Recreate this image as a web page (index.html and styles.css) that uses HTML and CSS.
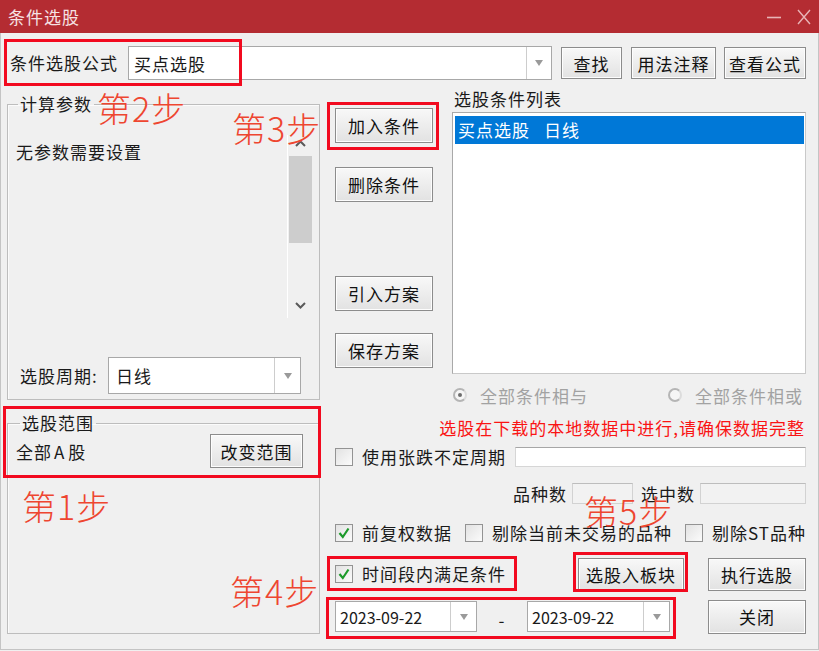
FILE: index.html
```html
<!DOCTYPE html>
<html lang="zh-CN">
<head>
<meta charset="UTF-8">
<title>条件选股</title>
<link rel="stylesheet" href="styles.css">
</head>
<body>
<div class="window">
    <div class="titlebar">
        <span class="title">条件选股</span>
        <span class="winbtns">
            <svg width="16" height="16" viewBox="0 0 16 16"><path d="M1 8.5 H15" stroke="#e8b4b6" stroke-width="1.6"/></svg>
            <svg width="16" height="16" viewBox="0 0 16 16"><path d="M2 1 L14 15 M14 1 L2 15" stroke="#e8b4b6" stroke-width="1.4"/></svg>
        </span>
    </div>

    <div class="client">
        <div class="toprow">
            <span class="lbl">条件选股公式</span>
            <div class="combo formula"><span class="val">买点选股</span><span class="arrow"></span></div>
            <button class="btn b-find">查找</button>
            <button class="btn b-note">用法注释</button>
            <button class="btn b-view">查看公式</button>
        </div>

        <div class="main">
            <div class="leftcol">
                <fieldset class="group params">
                    <legend>计算参数</legend>
                    <div class="param-area">
                        <div class="param-text">无参数需要设置</div>
                        <div class="scroll">
                            <div class="sb-up"><svg width="11" height="7" viewBox="0 0 11 7"><path d="M1 6 L5.5 1.5 L10 6" fill="none" stroke="#5a5a5a" stroke-width="2"/></svg></div>
                            <div class="sb-thumb"></div>
                            <div class="sb-space"></div>
                            <div class="sb-down"><svg width="11" height="7" viewBox="0 0 11 7"><path d="M1 1 L5.5 5.5 L10 1" fill="none" stroke="#5a5a5a" stroke-width="2"/></svg></div>
                        </div>
                    </div>
                    <div class="period">
                        <span class="period-lbl">选股周期:</span>
                        <div class="combo c-period"><span class="val">日线</span><span class="arrow"></span></div>
                    </div>
                </fieldset>

                <fieldset class="group range">
                    <legend>选股范围</legend>
                    <div class="range-row">
                        <span>全部<span class="latin-a">A</span>股</span>
                        <button class="btn b-range">改变范围</button>
                    </div>
                </fieldset>
            </div>

            <div class="rightarea">
                <div class="upper">
                    <div class="btncol">
                        <button class="btn b-add">加入条件</button>
                        <button class="btn b-del">删除条件</button>
                        <button class="btn b-load">引入方案</button>
                        <button class="btn b-save">保存方案</button>
                    </div>
                    <div class="listcol">
                        <div class="list-lbl">选股条件列表</div>
                        <div class="list">
                            <div class="list-item sel">买点选股<span class="period-col">日线</span></div>
                        </div>
                    </div>
                </div>

                <div class="radios">
                    <span class="radio-item first"><span class="radio on"></span><span class="dis">全部条件相与</span></span>
                    <span class="radio-item"><span class="radio"></span><span class="dis">全部条件相或</span></span>
                </div>

                <div class="warn">选股在下载的本地数据中进行,请确保数据完整</div>

                <div class="row row-use">
                    <span class="cb"></span>
                    <span class="cb-lbl">使用张跌不定周期</span>
                    <span class="edit"></span>
                </div>

                <div class="row row-count">
                    <span>品种数</span>
                    <span class="numbox n1"></span>
                    <span class="lbl2">选中数</span>
                    <span class="numbox n2"></span>
                </div>

                <div class="row row-opts">
                    <span class="cb"><svg width="16" height="16" viewBox="0 0 16 16"><path d="M3.5 8 L6.8 12 L12.5 3.5" fill="none" stroke="#1c9a2a" stroke-width="2.2"/></svg></span>
                    <span class="cb-lbl">前复权数据</span>
                    <span class="cb o2"></span>
                    <span class="cb-lbl">剔除当前未交易的品种</span>
                    <span class="cb o3"></span>
                    <span class="cb-lbl">剔除ST品种</span>
                </div>

                <div class="row row-action">
                    <span class="cb"><svg width="16" height="16" viewBox="0 0 16 16"><path d="M3.5 8 L6.8 12 L12.5 3.5" fill="none" stroke="#1c9a2a" stroke-width="2.2"/></svg></span>
                    <span class="cb-lbl">时间段内满足条件</span>
                    <button class="btn b-block">选股入板块</button>
                    <button class="btn b-run">执行选股</button>
                </div>

                <div class="row row-date">
                    <div class="combo date"><span class="val">2023-09-22</span><span class="arrow"></span></div>
                    <span class="dash">-</span>
                    <div class="combo date d2"><span class="val">2023-09-22</span><span class="arrow"></span></div>
                    <button class="btn b-close">关闭</button>
                </div>
            </div>
        </div>
    </div>

    <!-- 红框标注 -->
    <div class="mark m-formula"></div>
    <div class="mark m-add"></div>
    <div class="mark m-range"></div>
    <div class="mark m-time"></div>
    <div class="mark m-block"></div>
    <div class="mark m-date"></div>

    <div class="step s1">第1步</div>
    <div class="step s2">第2步</div>
    <div class="step s3">第3步</div>
    <div class="step s4">第4步</div>
    <div class="step s5">第5步</div>
</div>
</body>
</html>
```

FILE: styles.css
```css
* {
    box-sizing: border-box;
}
body {
    margin: 0;
    padding: 0;
    background-color: #f0f0f0;
    font-family: "Noto Sans CJK SC", "Noto Sans", sans-serif;
    font-size: 17px;
    letter-spacing: 1px;
    color: #1a1a1a;
}
.window {
    position: relative;
    width: 819px;
    height: 650px;
    overflow: hidden;
}
.titlebar {
    height: 33px;
    background-color: #b42c32;
    color: #f6e2e3;
    display: flex;
    align-items: center;
    padding-left: 8px;
    padding-right: 7px;
}
.title {
    flex: 1;
    line-height: 20px;
}
.winbtns {
    display: flex;
    gap: 14px;
}
.client {
    height: 617px;
    border: 1px solid #c4c4c4;
    border-top: 0;
    padding: 13px 0 0 6px;
}

/* top row */
.toprow {
    display: flex;
    align-items: center;
    height: 34px;
}
.lbl {
    margin-left: 3px;
    width: 108px;
    line-height: 20px;
}
.combo {
    display: flex;
    background-color: #fff;
    border: 1px solid #a8a8a8;
}
.combo .val {
    flex: 1;
    display: flex;
    align-items: center;
    padding-left: 5px;
}
.combo .arrow {
    width: 26px;
    border-left: 1px solid #cdcdcd;
    display: flex;
    align-items: center;
    justify-content: center;
}
.combo .arrow::after {
    content: "";
    border-top: 6px solid #9a9a9a;
    border-left: 4.5px solid transparent;
    border-right: 4.5px solid transparent;
}
.formula {
    margin-left: 10px;
    width: 424px;
    height: 34px;
}
.formula .arrow {
    width: 25px;
}
.btn {
    font-family: inherit;
    font-size: 17px;
    letter-spacing: 1px;
    color: #111;
    padding: 0;
    border: 1px solid #8c8c8c;
    background: linear-gradient(#f8f8f8, #e2e2e2);
    box-shadow: inset 0 0 0 1px #fdfdfd;
    cursor: pointer;
    white-space: nowrap;
}
.b-find {
    margin-left: 9px;
    width: 61px;
    height: 32px;
}
.b-note {
    margin-left: 9px;
    width: 85px;
    height: 32px;
}
.b-view {
    margin-left: 8px;
    width: 82px;
    height: 32px;
}

/* main */
.main {
    display: flex;
    margin-top: 9px;
}
.leftcol {
    width: 313px;
}
.group {
    margin: 0;
    padding: 0 7px 0 8px;
    border: 1px solid #bdbdbd;
    box-shadow: 1px 1px 0 #fbfbfb inset;
    min-width: 0;
}
.group legend {
    margin-left: 2px;
    padding: 0 2px;
    line-height: 20px;
}
.params {
    margin-top: 5px;
    height: 306px;
}
.param-area {
    display: flex;
    margin-top: 21px;
    height: 183px;
}
.param-text {
    flex: 1;
    padding-top: 6px;
    line-height: 22px;
}
.scroll {
    width: 25px;
    border-left: 1px solid #fff;
    display: flex;
    flex-direction: column;
    align-items: center;
}
.sb-up {
    height: 21px;
    display: flex;
    align-items: center;
    justify-content: center;
    padding-bottom: 4px;
}
.sb-thumb {
    width: 23px;
    height: 87px;
    background-color: #cdcdcd;
}
.sb-space {
    flex: 1;
}
.sb-down {
    height: 26px;
    display: flex;
    align-items: center;
    justify-content: center;
}
.period {
    display: flex;
    align-items: center;
    margin-top: 39px;
    height: 37px;
}
.period-lbl {
    margin-left: 4px;
    width: 88px;
}
.c-period {
    width: 193px;
    height: 37px;
}
.c-period .val {
    padding-left: 7px;
}
.range {
    margin-top: 13px;
    height: 221px;
}
.range legend {
    margin-left: 4px;
}
.range-row {
    display: flex;
    align-items: center;
    justify-content: space-between;
    margin-top: 1px;
    height: 34px;
    padding-right: 9px;
}
.latin-a {
    margin: 0 3px 0 2px;
}
.b-range {
    width: 93px;
    height: 34px;
}

/* right side */
.rightarea {
    margin-left: 15px;
    width: 471px;
}
.upper {
    display: flex;
    height: 285px;
}
.btncol {
    width: 98px;
    display: flex;
    flex-direction: column;
}
.btncol .btn {
    height: 35px;
}
.b-add {
    margin-top: 19px;
}
.b-del {
    margin-top: 24px;
}
.b-load {
    margin-top: 74px;
}
.b-save {
    margin-top: 22px;
}
.listcol {
    margin-left: 19px;
    width: 354px;
}
.list-lbl {
    height: 20px;
    line-height: 20px;
    padding-left: 2px;
}
.list {
    margin-top: 3px;
    height: 262px;
    background-color: #fff;
    border: 1px solid #a9a9a9;
    border-right-color: #c9c9c9;
    border-bottom-color: #c9c9c9;
    padding: 3px 1px 0 2px;
}
.list-item {
    height: 28px;
    line-height: 28px;
    padding-left: 3px;
}
.list-item.sel {
    background-color: #0078d7;
    color: #fff;
}
.period-col {
    margin-left: 14px;
}
.radios {
    display: flex;
    align-items: center;
    height: 22px;
    margin-top: 10px;
    padding-left: 118px;
}
.radio-item {
    display: flex;
    align-items: center;
}
.radio-item.first {
    width: 215px;
}
.radio {
    width: 14px;
    height: 14px;
    border-radius: 50%;
    border: 2px solid #b5b5b5;
    border-right-color: #dcdcdc;
    background-color: #f6f6f6;
    display: flex;
    align-items: center;
    justify-content: center;
    margin-right: 13px;
}
.radio.on::after {
    content: "";
    width: 4px;
    height: 4px;
    border-radius: 50%;
    background-color: #6d6d6d;
}
.dis {
    color: #a2a2a2;
}
.warn {
    margin-top: 11px;
    height: 22px;
    line-height: 22px;
    text-align: right;
    padding-right: 1px;
    color: #fa1414;
    letter-spacing: 1px;
    white-space: nowrap;
}
.row {
    display: flex;
    align-items: center;
    white-space: nowrap;
}
.cb {
    width: 18px;
    height: 18px;
    border: 1px solid #939393;
    background: linear-gradient(135deg, #e2e2e2, #fbfbfb);
    display: flex;
    align-items: center;
    justify-content: center;
    flex-shrink: 0;
}
.cb-lbl {
    margin-left: 9px;
    line-height: 20px;
    flex-shrink: 0;
}
.row-use {
    margin-top: 7px;
    height: 22px;
}
.edit {
    margin-left: auto;
    width: 291px;
    height: 20px;
    background-color: #fff;
    border: 1px solid #d6d6d6;
    border-top-color: #a6a6a6;
}
.row-count {
    margin-top: 14px;
    height: 22px;
    justify-content: flex-end;
}
.numbox {
    height: 21px;
    border: 1px solid #d2d2d2;
    border-top-color: #bdbdbd;
    background-color: #f2f2f2;
    margin-left: 5px;
}
.n1 {
    width: 61px;
}
.n2 {
    width: 106px;
}
.lbl2 {
    margin-left: 8px;
}
.row-opts {
    margin-top: 18px;
    height: 22px;
}
.o2 {
    margin-left: 13px;
}
.o3 {
    margin-left: 13px;
}
.row-action {
    margin-top: 13px;
    height: 34px;
}
.b-block {
    margin-left: 72px;
    width: 106px;
    height: 33px;
}
.b-run {
    margin-left: 24px;
    width: 98px;
    height: 33px;
}
.row-date {
    margin-top: 9px;
    height: 33px;
}
.date {
    width: 142px;
    height: 31px;
    font-size: 16px;
    letter-spacing: 0;
}
.date .val {
    padding-left: 4px;
}
.date .arrow {
    width: 26px;
}
.d2 {
    width: 143px;
}
.dash {
    width: 50px;
    text-align: center;
    padding-top: 6px;
}
.b-close {
    margin-left: auto;
    width: 98px;
    height: 34px;
}

/* 红框 */
.mark {
    position: absolute;
    border: 3px solid #f20a1f;
}
.m-formula {
    left: 4px;
    top: 39px;
    width: 238px;
    height: 47px;
}
.m-add {
    left: 327px;
    top: 102px;
    width: 112px;
    height: 48px;
}
.m-range {
    left: 3px;
    top: 406px;
    width: 318px;
    height: 72px;
}
.m-time {
    left: 327px;
    top: 556px;
    width: 190px;
    height: 35px;
}
.m-block {
    left: 573px;
    top: 552px;
    width: 115px;
    height: 40px;
}
.m-date {
    left: 326px;
    top: 597px;
    width: 350px;
    height: 42px;
}

/* 步骤 */
.step {
    position: absolute;
    font-size: 34px;
    font-weight: 300;
    line-height: 40px;
    letter-spacing: 1px;
    color: #ee4630;
}
.s1 {
    left: 22px;
    top: 486px;
}
.s2 {
    left: 97px;
    top: 88px;
}
.s3 {
    left: 232px;
    top: 108px;
}
.s4 {
    left: 230px;
    top: 571px;
}
.s5 {
    left: 584px;
    top: 491px;
}
```
